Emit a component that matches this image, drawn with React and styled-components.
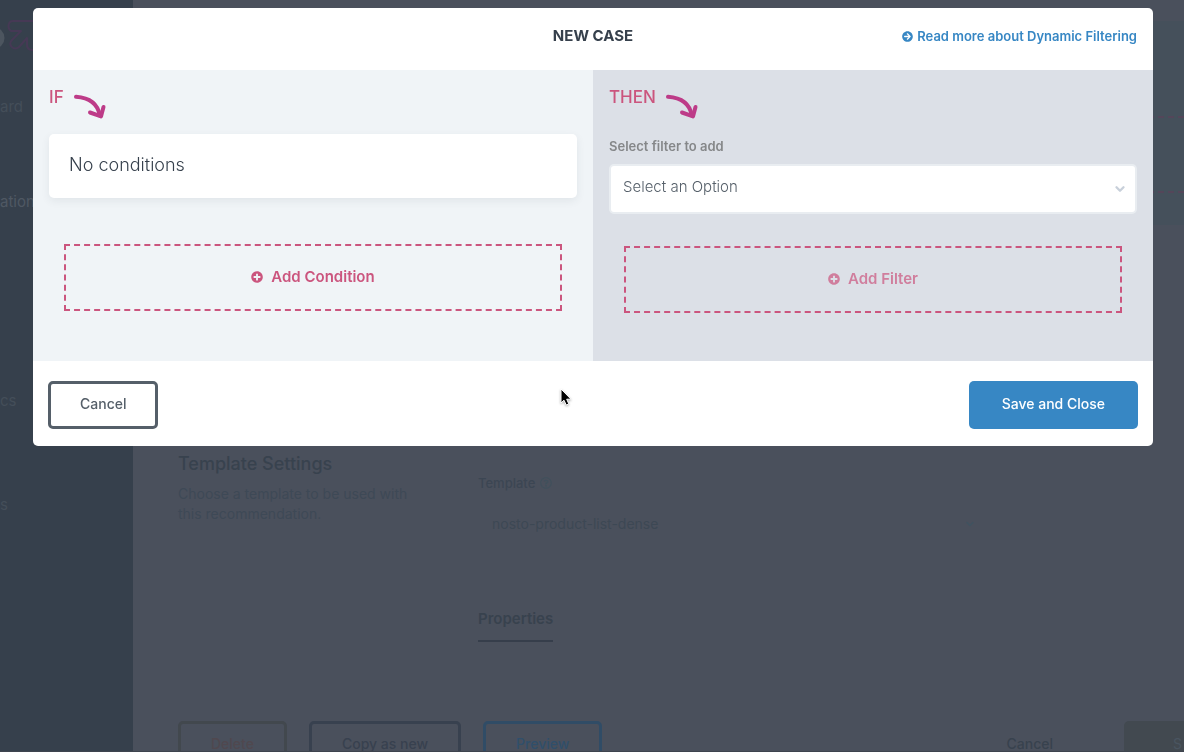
import React from 'react'
import styled, { createGlobalStyle } from 'styled-components'
import { FaPlusCircle, FaArrowCircleRight, FaRegQuestionCircle } from 'react-icons/fa'
import { ChevronDown } from 'lucide-react'

function CurvedArrow() {
    return (
        <svg width="34" height="28" viewBox="0 0 34 28" fill="none" stroke="#bd3b88" strokeWidth="4" strokeLinecap="round" strokeLinejoin="round" aria-hidden="true">
            <path d="M3 3.8C14 4.600 24.500 9.500 26.800 22.500" />
            <path d="M17 19.500L28 23.400L30.500 14" />
        </svg>
    )
}

function Logo() {
    return (
        <LogoMark viewBox="0 0 50 36" aria-hidden="true">
            <ellipse cx="-6" cy="18" rx="10.500" ry="10.500" fill="#4c555f" />
            <path d="M40 1H13C8 1 7 8 11 11H21L12 20C7 25 14 31 19 27L27 18V25C27 30 32 31 36 29" fill="none" stroke="#463955" strokeWidth="2" strokeLinejoin="round" />
        </LogoMark>
    )
}

function App() {
    return (
        <>
            <GlobalStyle />
            <Page>
                <Sidebar>
                    <Logo />
                    <NavItem href="#" $gap={39}>ard</NavItem>
                    <NavItem href="#" $gap={71} $light>ation</NavItem>
                    <NavItem href="#" $gap={175}>cs</NavItem>
                    <NavItem href="#" $gap={80}>s</NavItem>
                </Sidebar>
                <Main>
                    <CasePanel>
                        <CaseRow />
                    </CasePanel>
                    <Settings>
                        <div>
                            <SettingsTitle>Template Settings</SettingsTitle>
                            <SettingsText>Choose a template to be used with this recommendation.</SettingsText>
                        </div>
                        <Fields>
                            <TemplateLabel>Template <FaRegQuestionCircle size={12} /></TemplateLabel>
                            <TemplateValue>nosto-product-list-dense <ChevronDown size={12} strokeWidth={3} /></TemplateValue>
                            <Tab>Properties</Tab>
                        </Fields>
                    </Settings>
                    <Actions>
                        <PageButton $line="#42484e" $text="#50484f">Delete</PageButton>
                        <PageButton $line="#38414f" $text="#38414f">Copy as new</PageButton>
                        <PageButton $line="#304c66" $text="#304f6b">Preview</PageButton>
                        <PlainButton>Cancel</PlainButton>
                        <SaveButton>S</SaveButton>
                    </Actions>
                </Main>
            </Page>
            <Overlay>
                <Dialog role="dialog" aria-labelledby="dialog-title">
                    <Header>
                        <Title id="dialog-title">NEW CASE</Title>
                        <MoreLink href="#"><FaArrowCircleRight size={11} />Read more about Dynamic Filtering</MoreLink>
                    </Header>
                    <Body>
                        <Column $bg="#f0f4f7">
                            <Step>IF <CurvedArrow /></Step>
                            <Card>No conditions</Card>
                            <AddButton $space={46}><AddText><FaPlusCircle size={12} />Add Condition</AddText></AddButton>
                        </Column>
                        <Column $bg="#dce0e7">
                            <Step>THEN <CurvedArrow /></Step>
                            <FilterLabel htmlFor="filter">Select filter to add</FilterLabel>
                            <SelectWrap>
                                <Select id="filter" defaultValue="">
                                    <option value="">Select an Option</option>
                                </Select>
                                <ChevronDown size={14} strokeWidth={4} />
                            </SelectWrap>
                            <AddButton $space={32} disabled><AddText $faded><FaPlusCircle size={12} />Add Filter</AddText></AddButton>
                        </Column>
                    </Body>
                    <Footer>
                        <CancelButton>Cancel</CancelButton>
                        <ConfirmButton>Save and Close</ConfirmButton>
                    </Footer>
                </Dialog>
            </Overlay>
            <Pointer width="14" height="20" viewBox="0 0 14 20" aria-hidden="true">
                <path d="M2 2V16L5 13.200L7.200 18L9.800 16.900L7.700 12.200H12Z" fill="#000" stroke="#fff" strokeWidth="1" />
            </Pointer>
        </>
    )
}

const GlobalStyle=createGlobalStyle`
    * {
        box-sizing: border-box;
    }

    body {
        margin: 0;
        background: #4a505c;
        color: #36404c;
        font-family: Inter, "Liberation Sans", sans-serif;
        font-size: 14px;
    }

    h1, h2, h3, p {
        margin: 0;
    }

    button, select {
        font-family: inherit;
        font-size: 14px;
    }
`;

const Page=styled.div`
    display: flex;
    height: 100vh;
    overflow: hidden;
    border-bottom: 1px solid #3e444e;
`;

const Sidebar=styled.nav`
    flex: 0 0 133px;
    display: flex;
    flex-direction: column;
    padding-top: 20px;
    background: #36404c;
`;

const LogoMark=styled.svg`
    width: 50px;
    height: 36px;
`;

const NavItem=styled.a`
    margin-top: ${props => props.$gap}px;
    color: ${props => props.$light ? '#4f5863' : '#444e59'};
    font-size: 15px;
    line-height: 24px;
    text-decoration: none;
`;

const Main=styled.main`
    flex: 1;
    min-width: 0;
    padding-top: 21px;
`;

const CasePanel=styled.section`
    height: 204px;
    padding: 95px 0 0 21px;
    background: #45505b;
`;

const CaseRow=styled.div`
    height: 77px;
    border: 2px dashed #54465a;
    border-width: 2px 0;
`;

const Settings=styled.section`
    display: grid;
    grid-template-columns: 252px 1fr;
    column-gap: 48px;
    padding: 228px 45px 0;
`;

const SettingsTitle=styled.h2`
    color: #38424e;
    font-size: 18px;
    font-weight: 500;
    line-height: 22px;
`;

const SettingsText=styled.p`
    margin-top: 9px;
    color: #3e4956;
    font-size: 14px;
    line-height: 20px;
`;

const Fields=styled.div`
    display: flex;
    flex-direction: column;
    align-items: flex-start;
    padding-top: 20px;
`;

const TemplateLabel=styled.div`
    display: flex;
    align-items: center;
    gap: 5px;
    color: #3c4653;
    font-size: 13px;
    font-weight: 500;
    line-height: 20px;

    svg {
        color: #40505c;
    }
`;

const TemplateValue=styled.div`
    display: flex;
    align-items: center;
    justify-content: space-between;
    width: 498px;
    margin-top: 21px;
    padding-left: 14px;
    color: #3d4854;
    line-height: 20px;

    svg {
        color: #405360;
    }
`;

const Tab=styled.h3`
    margin-top: 75px;
    padding-bottom: 11px;
    border-bottom: 2px solid #363e4b;
    color: #38424e;
    font-size: 15px;
    font-weight: 600;
    line-height: 20px;
`;

const Actions=styled.div`
    display: flex;
    gap: 22px;
    margin-top: 79px;
    padding-left: 45px;
`;

const PageButton=styled.button`
    height: 48px;
    padding: 0 30px 3px;
    border: 3px solid ${props => props.$line};
    border-radius: 5px;
    background: transparent;
    color: ${props => props.$text};
    font-weight: 500;
`;

const PlainButton=styled.button`
    margin-left: auto;
    padding: 0 49px 3px;
    border: 0;
    background: transparent;
    color: #38424e;
    font-weight: 500;
`;

const SaveButton=styled.button`
    width: 60px;
    padding: 0 0 3px 49px;
    border: 0;
    border-radius: 5px 0 0 0;
    background: #424950;
    color: #4a5560;
    text-align: left;
`;

const Overlay=styled.div`
    position: fixed;
    inset: 0;
    padding: 8px 31px 0 33px;
`;

const Dialog=styled.section`
    overflow: hidden;
    border-radius: 5px;
    background: #fff;
`;

const Header=styled.header`
    display: grid;
    grid-template-columns: 1fr auto 1fr;
    align-items: center;
    height: 62px;
    padding: 0 16px 6px;
`;

const Title=styled.h1`
    grid-column: 2;
    font-size: 15px;
    font-weight: 700;
    line-height: 20px;
`;

const MoreLink=styled.a`
    display: flex;
    align-items: center;
    justify-self: end;
    gap: 4px;
    color: #3787c4;
    font-size: 13px;
    font-weight: 600;
    text-decoration: none;
`;

const Body=styled.div`
    display: grid;
    grid-template-columns: 1fr 1fr;
`;

const Column=styled.section`
    display: flex;
    flex-direction: column;
    padding: 16px 16px 48px;
    background: ${props => props.$bg};
`;

const Step=styled.h2`
    display: flex;
    align-items: flex-start;
    gap: 9px;
    height: 48px;
    color: #cb557e;
    font-size: 17px;
    font-weight: 500;
    line-height: 22px;

    svg {
        margin-top: 7px;
    }
`;

const Card=styled.div`
    padding: 19px 20px 21px;
    border-radius: 5px;
    background: #fff;
    box-shadow: 0 3px 8px rgba(54, 64, 76, 0.08);
    font-size: 18px;
    font-weight: 300;
    line-height: 24px;
`;

const AddButton=styled.button`
    height: 67px;
    margin: ${props => props.$space}px 15px 0;
    padding: 0 0 2px;
    border: 2px dashed #cb557e;
    background: transparent;
    color: #cb557e;
    font-size: 15px;
    font-weight: 600;
`;

const AddText=styled.span`
    display: flex;
    align-items: center;
    justify-content: center;
    gap: 8px;
    opacity: ${props => props.$faded ? 0.7 : 1};
`;

const FilterLabel=styled.label`
    padding: 2px 0 8px;
    color: #858789;
    font-size: 13px;
    font-weight: 600;
    line-height: 20px;
`;

const SelectWrap=styled.div`
    position: relative;

    svg {
        position: absolute;
        top: 18px;
        right: 10px;
        color: #c8d0da;
        pointer-events: none;
    }
`;

const Select=styled.select`
    display: block;
    width: 100%;
    height: 50px;
    padding: 0 12px 5px;
    border: 2px solid #e9edf1;
    border-radius: 5px;
    appearance: none;
    background: #fff;
    color: #555f69;
    font-size: 15px;
    font-weight: 300;
`;

const Footer=styled.footer`
    display: flex;
    justify-content: space-between;
    padding: 20px 15px 17px;
`;

const CancelButton=styled.button`
    height: 48px;
    padding: 0 29px 3px;
    border: 3px solid #555f69;
    border-radius: 5px;
    background: #fff;
    color: #555f69;
    font-weight: 500;
`;

const ConfirmButton=styled.button`
    height: 48px;
    padding: 0 33px 3px;
    border: 0;
    border-radius: 5px;
    background: #3787c4;
    color: #fff;
    font-weight: 500;
`;

const Pointer=styled.svg`
    position: fixed;
    top: 387px;
    left: 559px;
    filter: drop-shadow(0 1px 1px rgba(0, 0, 0, 0.3));
`;

export default App
